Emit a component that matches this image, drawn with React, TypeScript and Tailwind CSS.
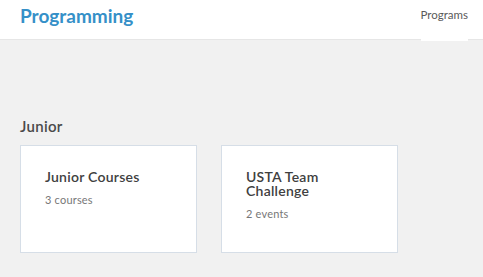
export default function App() {
  return (
    <div className="min-h-[277px] bg-[#f1f1f1] font-['Lato',sans-serif]">
      <header className="flex h-10 items-start justify-between border-b border-[#e6e6e6] bg-white pl-5 pr-[15px]">
        <h1 className="mt-[4px] text-[19px] font-bold leading-6 text-[#3590c8]">Programming</h1>
        <nav className="-mb-px flex h-[41px] items-start bg-white">
          <span className="mt-[7px] text-[11.5px] leading-4 text-[#5a5a5a]">Programs</span>
        </nav>
      </header>
      <main className="px-5 pt-[78px]">
        <h2 className="text-[15px] font-semibold leading-4 tracking-[0.3px] text-[#4a4a4a]">Junior</h2>
        <div className="mt-[11px] flex gap-[24px]">
          <Card title="Junior Courses" sub="3 courses" />
          <Card title="USTA Team Challenge" sub="2 events" />
        </div>
      </main>
    </div>
  );
}

function Card({ title, sub }: { title: string; sub: string }) {
  return (
    <div className="h-[108px] w-[177px] border border-[#d6dee7] bg-white pl-6 pr-8 pt-[24px]">
      <h3 className="text-[14px] font-semibold leading-[14px] tracking-[0.25px] text-[#404040]">{title}</h3>
      <p className="mt-[10px] text-[11px] leading-3 tracking-[0.2px] text-[#777]">{sub}</p>
    </div>
  );
}
